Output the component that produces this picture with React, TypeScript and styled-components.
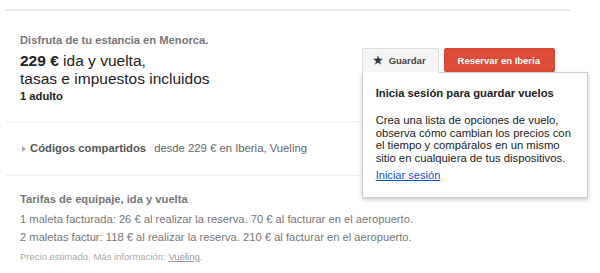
import styled, { createGlobalStyle } from "styled-components";

const GlobalStyle = createGlobalStyle`
  body {
    margin: 0;
    background: #fff;
    font-family: "Liberation Sans", Arial, sans-serif;
  }
`;

const Page = styled.div`
  width: 565px;
  padding: 9px 0 0 5px;
`;

const TopRule = styled.div`
  height: 2px;
  background: #ebebeb;
`;

const Summary = styled.section`
  display: flex;
  justify-content: space-between;
  align-items: flex-start;
  padding: 21px 15px 0 15px;
`;

const Tagline = styled.div`
  font-size: 11.2px;
  line-height: 16px;
  font-weight: bold;
  color: #777;
`;

const Price = styled.div`
  margin-top: 4px;
  font-size: 15.5px;
  line-height: 18px;
  color: #222;

  strong {
    font-weight: bold;
  }
`;

const Travellers = styled.div`
  margin-top: 1px;
  font-size: 11.2px;
  line-height: 15px;
  font-weight: bold;
  color: #222;
`;

const Actions = styled.div`
  position: relative;
  display: flex;
  gap: 5px;
  margin-top: 16px;
`;

interface ButtonProps {
  $primary?: boolean;
}

const Button = styled.button<ButtonProps>`
  position: relative;
  z-index: 2;
  height: ${(p) => (p.$primary ? "24px" : "25px")};
  padding: ${(p) => (p.$primary ? "0 14px 0 13px" : "0 12px 0 10px")};
  font-family: inherit;
  font-size: 9.5px;
  font-weight: bold;
  border-radius: ${(p) => (p.$primary ? "2px" : "2px 2px 0 0")};
  border: 1px solid ${(p) => (p.$primary ? "#d14836" : "#dcdcdc")};
  border-bottom-color: ${(p) => (p.$primary ? "#d14836" : "#fff")};
  background: ${(p) => (p.$primary ? "#dd4b39" : "#f5f5f5")};
  color: ${(p) => (p.$primary ? "#fff" : "#444")};
  display: flex;
  align-items: center;
  gap: 6px;
  cursor: pointer;
`;

const Star = styled.span`
  font-size: 11px;
  color: #333;
`;

const Popup = styled.div`
  position: absolute;
  z-index: 1;
  top: 24px;
  left: 0;
  width: 201px;
  padding: 12px 10px 14px 13px;
  background: #fff;
  border: 1px solid #ccc;
  box-shadow: 0 2px 4px rgba(0, 0, 0, 0.2);
  color: #222;
`;

const PopupTitle = styled.div`
  font-size: 11.25px;
  line-height: 16px;
  font-weight: bold;
  margin-bottom: 13px;
`;

const PopupText = styled.p`
  margin: 0;
  font-size: 11.3px;
  line-height: 12.6px;
  white-space: nowrap;
`;

const Link = styled.a`
  display: inline-block;
  margin-top: 4px;
  font-size: 11.1px;
  line-height: 14px;
  color: #15c;
  text-decoration: underline;
  cursor: pointer;
`;

interface DividerProps {
  $gap?: number;
}

const Divider = styled.div<DividerProps>`
  margin: ${(p) => p.$gap ?? 0}px 0 0 2px;
  border-top: 1px dotted #ddd;
`;

const ShareRow = styled.div`
  display: flex;
  align-items: center;
  padding: 19px 15px;
  font-size: 11.3px;
  line-height: 15px;
`;

const Caret = styled.span`
  width: 0;
  height: 0;
  margin: 0 4px 0 2px;
  border-top: 3px solid transparent;
  border-bottom: 3px solid transparent;
  border-left: 4px solid #aaa;
`;

const ShareLabel = styled.span`
  font-weight: bold;
  color: #555;
  margin-right: 8px;
`;

const ShareValue = styled.span`
  color: #666;
`;

const Fees = styled.section`
  padding: 15px 15px 0;
  font-size: 11.2px;
  color: #777;
`;

const FeesTitle = styled.div`
  font-weight: bold;
  line-height: 16px;
  margin-bottom: 3px;
`;

const FeeLine = styled.div`
  line-height: 18px;
`;

const Note = styled.div`
  margin-top: 4px;
  font-size: 9.5px;
  line-height: 14px;
  color: #aaa;

  a {
    color: #999;
    text-decoration: underline;
  }
`;

export default function App() {
  return (
    <>
      <GlobalStyle />
      <Page>
        <TopRule />
        <Summary>
          <div>
            <Tagline>Disfruta de tu estancia en Menorca.</Tagline>
            <Price>
              <strong>229 €</strong> ida y vuelta,
              <br />
              tasas e impuestos incluidos
            </Price>
            <Travellers>1 adulto</Travellers>
          </div>
          <Actions>
            <Button>
              <Star>★</Star>Guardar
            </Button>
            <Button $primary>Reservar en Iberia</Button>
            <Popup>
              <PopupTitle>Inicia sesión para guardar vuelos</PopupTitle>
              <PopupText>
                Crea una lista de opciones de vuelo,
                <br />
                observa cómo cambian los precios con
                <br />
                el tiempo y compáralos en un mismo
                <br />
                sitio en cualquiera de tus dispositivos.
              </PopupText>
              <Link>Iniciar sesión</Link>
            </Popup>
          </Actions>
        </Summary>
        <Divider $gap={17} />
        <ShareRow>
          <Caret />
          <ShareLabel>Códigos compartidos</ShareLabel>
          <ShareValue>desde 229 € en Iberia, Vueling</ShareValue>
        </ShareRow>
        <Divider />
        <Fees>
          <FeesTitle>Tarifas de equipaje, ida y vuelta</FeesTitle>
          <FeeLine>
            1 maleta facturada: 26 € al realizar la reserva. 70 € al facturar
            en el aeropuerto.
          </FeeLine>
          <FeeLine>
            2 maletas factur: 118 € al realizar la reserva. 210 € al facturar en
            el aeropuerto.
          </FeeLine>
          <Note>
            Precio estimado. Más información: <a>Vueling</a>.
          </Note>
        </Fees>
      </Page>
    </>
  );
}
